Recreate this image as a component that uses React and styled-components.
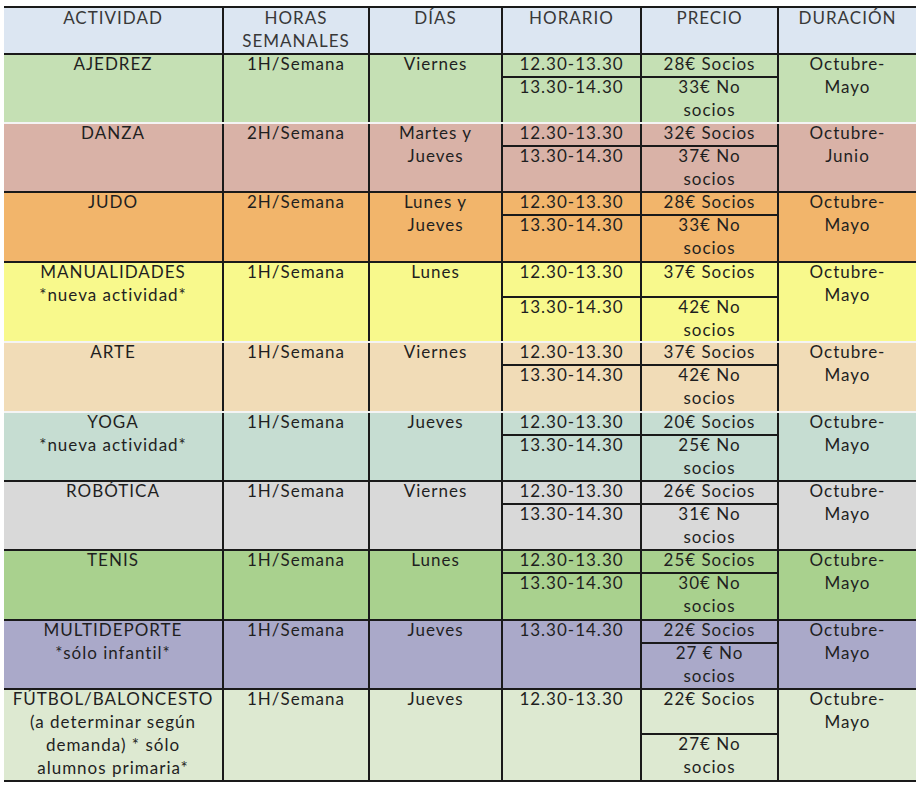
import React from 'react';
import styled, { createGlobalStyle } from 'styled-components';

const GlobalStyle = createGlobalStyle`
  html, body {
    margin: 0;
    padding: 0;
    background: #ffffff;
  }
  * {
    box-sizing: border-box;
  }
`;

const Page = styled.div`
  padding: 6px 7px 0 4px;
  font-family: Lato, "Liberation Sans", sans-serif;
  font-size: 17px;
  letter-spacing: 1px;
  line-height: 23px;
  color: #1f1f1f;
`;

const Table = styled.div`
  width: 912px;
  border-bottom: 2px solid #1a1a1a;
`;

const Row = styled.div`
  display: grid;
  grid-template-columns: 218px 146px 133px 139px 137px 139px;
  height: ${(p) => p.$h}px;
  background: ${(p) => p.$bg};
  border-top: 2px solid ${(p) => (p.$sep === 'light' ? '#f4f4f4' : '#1a1a1a')};
`;

const HeaderRow = styled(Row)`
  color: #383838;
`;

const Cell = styled.div`
  text-align: center;
  padding-top: ${(p) => (p.$pad ? p.$pad : 0)}px;
  & + & {
    border-left: 2px solid #1a1a1a;
  }
`;

const SplitCell = styled(Cell)`
  display: flex;
  flex-direction: column;
  padding-top: 0;
`;

const Slot = styled.div`
  flex: ${(p) => (p.$h ? `0 0 ${p.$h}px` : '1 1 auto')};
  & + & {
    border-top: 2px solid #1a1a1a;
  }
`;

// Calibri-like metrics: pull the glyphs up towards the top of each line box
const Text = styled.div`
  margin-top: -3px;
`;

const Lines = ({ items }) => (
  <Text>
    {items.map((t, i) => (
      <React.Fragment key={i}>
        {i > 0 && <br />}
        {t}
      </React.Fragment>
    ))}
  </Text>
);

const rows = [
  {
    name: ['AJEDREZ'], hours: '1H/Semana', days: ['Viernes'],
    times: ['12.30-13.30', '13.30-14.30'],
    prices: [['28€ Socios'], ['33€ No', 'socios']],
    split: 21, duration: ['Octubre-', 'Mayo'], bg: '#c5e0b4', h: 69, sep: 'dark',
  },
  {
    name: ['DANZA'], hours: '2H/Semana', days: ['Martes y', 'Jueves'],
    times: ['12.30-13.30', '13.30-14.30'],
    prices: [['32€ Socios'], ['37€ No', 'socios']],
    split: 21, duration: ['Octubre-', 'Junio'], bg: '#d9b2a7', h: 69, sep: 'light',
  },
  {
    name: ['JUDO'], hours: '2H/Semana', days: ['Lunes y', 'Jueves'],
    times: ['12.30-13.30', '13.30-14.30'],
    prices: [['28€ Socios'], ['33€ No', 'socios']],
    split: 21, duration: ['Octubre-', 'Mayo'], bg: '#f2b56b', h: 70, sep: 'dark',
  },
  {
    name: ['MANUALIDADES', '*nueva actividad*'], hours: '1H/Semana', days: ['Lunes'],
    times: ['12.30-13.30', '13.30-14.30'],
    prices: [['37€ Socios'], ['42€ No', 'socios']],
    split: 33, duration: ['Octubre-', 'Mayo'], bg: '#f8f98c', h: 80, sep: 'dark',
  },
  {
    name: ['ARTE'], hours: '1H/Semana', days: ['Viernes'],
    times: ['12.30-13.30', '13.30-14.30'],
    prices: [['37€ Socios'], ['42€ No', 'socios']],
    split: 21, duration: ['Octubre-', 'Mayo'], bg: '#f1dcb7', h: 70, sep: 'light',
  },
  {
    name: ['YOGA', '*nueva actividad*'], hours: '1H/Semana', days: ['Jueves'],
    times: ['12.30-13.30', '13.30-14.30'],
    prices: [['20€ Socios'], ['25€ No', 'socios']],
    split: 21, duration: ['Octubre-', 'Mayo'], bg: '#c6ddd2', h: 69, sep: 'light',
  },
  {
    name: ['ROBÓTICA'], hours: '1H/Semana', days: ['Viernes'],
    times: ['12.30-13.30', '13.30-14.30'],
    prices: [['26€ Socios'], ['31€ No', 'socios']],
    split: 21, duration: ['Octubre-', 'Mayo'], bg: '#d9d9d9', h: 69, sep: 'dark',
  },
  {
    name: ['TENIS'], hours: '1H/Semana', days: ['Lunes'],
    times: ['12.30-13.30', '13.30-14.30'],
    prices: [['25€ Socios'], ['30€ No', 'socios']],
    split: 21, duration: ['Octubre-', 'Mayo'], bg: '#a9d18e', h: 70, sep: 'dark',
  },
  {
    name: ['MULTIDEPORTE', '*sólo infantil*'], hours: '1H/Semana', days: ['Jueves'],
    times: ['13.30-14.30'],
    prices: [['22€ Socios'], ['27 € No', 'socios']],
    split: 21, duration: ['Octubre-', 'Mayo'], bg: '#aaa9c9', h: 69, sep: 'dark',
  },
  {
    name: ['FÚTBOL/BALONCESTO', '(a determinar según', 'demanda) * sólo', 'alumnos primaria*'],
    hours: '1H/Semana', days: ['Jueves'],
    times: ['12.30-13.30'],
    prices: [['22€ Socios'], ['27€ No', 'socios']],
    split: 43, duration: ['Octubre-', 'Mayo'], bg: '#dde9d1', h: 92, sep: 'dark',
  },
];

const headers = [['ACTIVIDAD'], ['HORAS', 'SEMANALES'], ['DÍAS'], ['HORARIO'], ['PRECIO'], ['DURACIÓN']];

const Split = ({ entries, split }) => (
  <SplitCell>
    {entries.map((lines, i) => (
      <Slot key={i} $h={i === 0 && entries.length > 1 ? split : 0}>
        <Lines items={lines} />
      </Slot>
    ))}
  </SplitCell>
);

export default function App() {
  return (
    <Page>
      <GlobalStyle />
      <Table>
        <HeaderRow $h={47} $bg="#dce6f2" $sep="dark">
          {headers.map((h, i) => (
            <Cell key={i} $pad={1}>
              <Lines items={h} />
            </Cell>
          ))}
        </HeaderRow>
        {rows.map((r) => (
          <Row key={r.name[0]} $h={r.h} $bg={r.bg} $sep={r.sep}>
            <Cell><Lines items={r.name} /></Cell>
            <Cell><Lines items={[r.hours]} /></Cell>
            <Cell><Lines items={r.days} /></Cell>
            <Split entries={r.times.map((t) => [t])} split={r.split} />
            <Split entries={r.prices} split={r.split} />
            <Cell><Lines items={r.duration} /></Cell>
          </Row>
        ))}
      </Table>
    </Page>
  );
}
